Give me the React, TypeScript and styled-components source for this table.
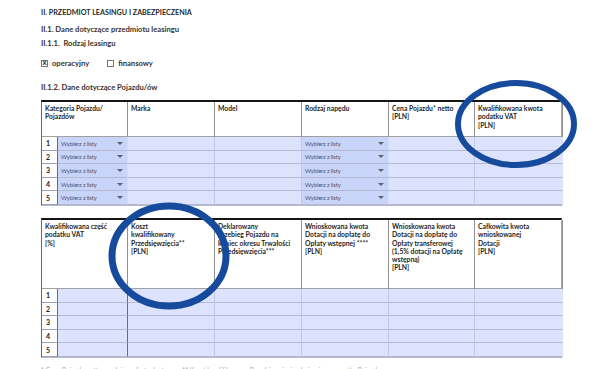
import React from 'react';
import styled, { createGlobalStyle } from 'styled-components';

const GlobalStyle = createGlobalStyle`
  html, body {
    margin: 0;
    padding: 0;
    background: #ffffff;
  }
  body {
    font-family: Lato, "Liberation Sans", sans-serif;
    color: #222;
  }
`;

const Page = styled.div`
  position: relative;
  width: 604px;
  height: 369px;
  overflow: hidden;
  padding: 8px 0 0 41px;
  box-sizing: border-box;
`;

const Title = styled.div`
  font-size: 7.2px;
  line-height: 10px;
  font-weight: 700;
  color: #2a2a2a;
  text-transform: uppercase;
`;

const Heading = styled.div<{ $top: number }>`
  margin-top: ${p => p.$top}px;
  font-size: 7.6px;
  line-height: 10px;
  font-weight: 700;
  color: #3a3128;
  white-space: pre;
`;

const CheckRow = styled.div`
  margin-top: 10px;
  display: flex;
  align-items: center;
  height: 10px;
  gap: 18px;
`;

const CheckItem = styled.label`
  display: flex;
  align-items: center;
  gap: 4px;
  font-size: 7.6px;
  font-weight: 700;
  color: #3a3128;
`;

const Box = styled.span`
  width: 7px;
  height: 7px;
  border: 1px solid #777;
  box-sizing: border-box;
  display: inline-flex;
  align-items: center;
  justify-content: center;
  font-size: 6px;
  line-height: 1;
  color: #444;
  font-family: "DejaVu Sans", sans-serif;
`;

const Grid = styled.div<{ $top: number }>`
  margin-top: ${p => p.$top}px;
  width: 521px;
  display: grid;
  grid-template-columns: 16px 70px 87px 87px 87px 86px 88px;
  border-top: 2px solid #151515;
  border-left: 1px solid #6a6a6a;
  border-right: 1.5px solid #a8a8a8;
  border-bottom: 1.5px solid #b5b8c8;
  box-sizing: border-box;
`;

const HeadCell = styled.div<{ $span?: number; $h: number }>`
  grid-column: span ${p => p.$span ?? 1};
  height: ${p => p.$h}px;
  box-sizing: border-box;
  padding: 2px 3px 0 3px;
  border-right: 1.5px solid #929292;
  border-bottom: 1px solid #a0a0a0;
  font-size: 6.8px;
  line-height: 8.3px;
  font-weight: 700;
  color: #262626;
  white-space: pre;
  &:last-child {
    border-right: none;
  }
`;

const NumCell = styled.div`
  height: 13.6px;
  box-sizing: border-box;
  background: #ffffff;
  border-right: 1px solid #6c6c6c;
  border-bottom: 1px solid #9ea1b0;
  font-size: 7px;
  font-weight: 700;
  color: #222;
  display: flex;
  align-items: center;
  padding-left: 4px;
`;

const InputCell = styled.div<{ $strong?: boolean; $last?: boolean }>`
  height: 13.6px;
  box-sizing: border-box;
  background: #dde2fd;
  border-right: 1px solid ${p => (p.$strong ? '#6e6e6e' : p.$last ? 'transparent' : '#c2c7e4')};
  border-bottom: 1px solid #b4b9d4;
`;

const SelectCell = styled.div`
  height: 13.6px;
  box-sizing: border-box;
  background: #c9d4f9;
  border-right: 1px solid #d6dcf6;
  border-bottom: 1px solid #b4b9d4;
  display: flex;
  align-items: center;
  justify-content: space-between;
  padding: 0 4px 0 3px;
  font-size: 5.9px;
  color: #4d5470;
  letter-spacing: -0.15px;
`;

const Arrow = styled.span`
  width: 0;
  height: 0;
  border-left: 3.5px solid transparent;
  border-right: 3.5px solid transparent;
  border-top: 3px solid #5c6070;
`;

const Footnote = styled.div`
  margin-top: 8px;
  font-size: 6.6px;
  line-height: 9px;
  color: #a8a8a8;
  white-space: nowrap;
`;

const Overlay = styled.svg`
  position: absolute;
  left: 0;
  top: 0;
  pointer-events: none;
`;

const rows = [1, 2, 3, 4, 5];

const head1 = [
  { text: 'Kategoria Pojazdu/\nPojazdów', span: 2 },
  { text: 'Marka' },
  { text: 'Model' },
  { text: 'Rodzaj napędu' },
  { text: 'Cena Pojazdu* netto\n[PLN]' },
  { text: 'Kwalifikowana kwota\npodatku VAT\n[PLN]' },
];

const head2 = [
  { text: 'Kwalifikowana część\npodatku VAT\n[%]', span: 2 },
  { text: 'Koszt\nkwalifikowany\nPrzedsięwzięcia**\n[PLN]' },
  { text: 'Deklarowany\nprzebieg Pojazdu na\nkoniec okresu Trwałości\nPrzedsięwzięcia***' },
  { text: 'Wnioskowana kwota\nDotacji na dopłatę do\nOpłaty wstępnej ****\n[PLN]' },
  { text: 'Wnioskowana kwota\nDotacji na dopłatę do\nOpłaty transferowej\n(1,5% dotacji na Opłatę\nwstępną)\n[PLN]' },
  { text: 'Całkowita kwota\nwnioskowanej\nDotacji\n[PLN]' },
];

const Select: React.FC = () => (
  <SelectCell>
    <span>Wybierz z listy</span>
    <Arrow />
  </SelectCell>
);

const App: React.FC = () => (
  <Page>
    <GlobalStyle />
    <Title>II. Przedmiot leasingu i zabezpieczenia</Title>
    <Heading $top={6}>II.1. Dane dotyczące przedmiotu leasingu</Heading>
    <Heading $top={4}>{'II.1.1.  Rodzaj leasingu'}</Heading>
    <CheckRow>
      <CheckItem>
        <Box>X</Box>
        operacyjny
      </CheckItem>
      <CheckItem>
        <Box />
        finansowy
      </CheckItem>
    </CheckRow>
    <Heading $top={14}>II.1.2. Dane dotyczące Pojazdu/ów</Heading>

    <Grid $top={8}>
      {head1.map(h => (
        <HeadCell key={h.text} $span={h.span} $h={35}>
          {h.text}
        </HeadCell>
      ))}
      {rows.map(n => (
        <React.Fragment key={n}>
          <NumCell>{n}</NumCell>
          <Select />
          <InputCell />
          <InputCell />
          <Select />
          <InputCell />
          <InputCell $last />
        </React.Fragment>
      ))}
    </Grid>

    <Grid $top={12}>
      {head2.map(h => (
        <HeadCell key={h.text} $span={h.span} $h={69}>
          {h.text}
        </HeadCell>
      ))}
      {rows.map(n => (
        <React.Fragment key={n}>
          <NumCell>{n}</NumCell>
          <InputCell $strong />
          <InputCell />
          <InputCell />
          <InputCell />
          <InputCell />
          <InputCell $last />
        </React.Fragment>
      ))}
    </Grid>

    <Footnote>
      * Cena Pojazdu netto zgodnie z ofertą dostawcy; ** Koszt kwalifikowany Przedsięwzięcia obejmuje cenę netto Pojazdu
    </Footnote>

    <Overlay width={604} height={369} viewBox="0 0 604 369">
      <ellipse cx={516} cy={124} rx={58} ry={41} fill="none" stroke="#164a9c" strokeWidth={6} />
      <ellipse cx={169} cy={256} rx={57} ry={50} fill="none" stroke="#164a9c" strokeWidth={7} />
    </Overlay>
  </Page>
);

export default App;
